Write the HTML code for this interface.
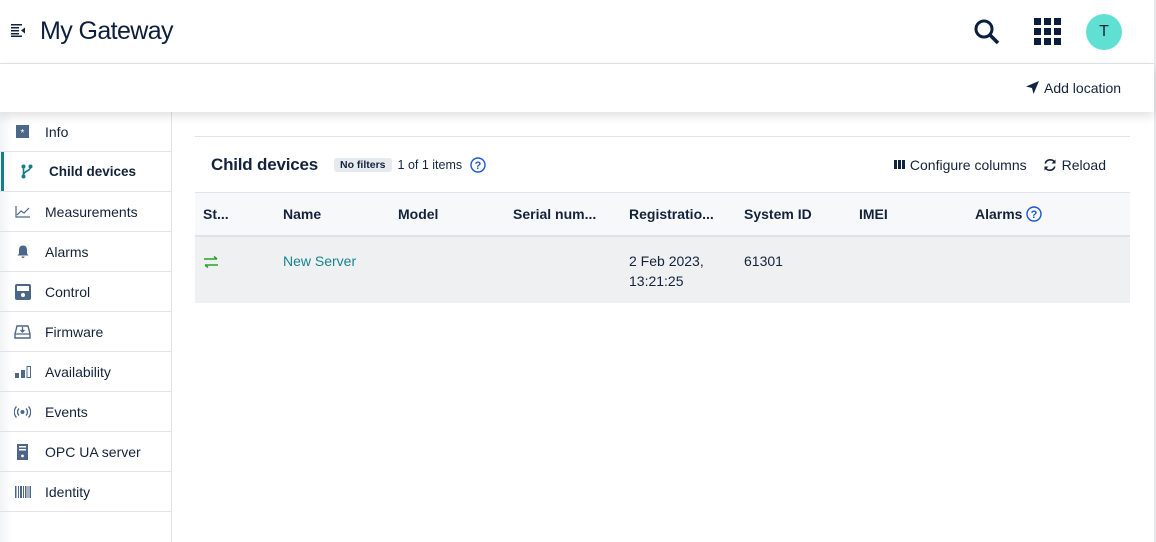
<!DOCTYPE html>
<html><head><style>
*{box-sizing:border-box;margin:0;padding:0}
body{width:1156px;height:542px;overflow:hidden;background:#fff;font-family:"Liberation Sans",sans-serif;color:#14233c;position:relative}
.hdr{position:absolute;left:0;top:0;width:1154px;height:64px;border-bottom:1px solid #e1e3e8;background:#fff}
.sub{position:absolute;left:0;top:64px;width:1154px;height:48px;background:#fff;box-shadow:0 4px 10px rgba(0,0,0,.12);z-index:2}
.rb{position:absolute;right:0;top:0;width:2px;height:542px;background:#e4e6ea}
.side{position:absolute;left:0;top:112px;width:172px;height:430px;border-right:1px solid #e1e3e8;background:linear-gradient(90deg,#f2f3f5 0,#fff 12px)}
.it{height:40px;border-bottom:1px solid #e1e3e8;display:flex;align-items:center;font-size:14px;position:relative}
.it .ic{width:45px;display:flex;justify-content:center;padding-left:6px;padding-right:6px}
.it.act{font-weight:bold;font-size:13.5px}
.it.act:before{content:"";position:absolute;left:1px;top:0;bottom:0;width:3px;background:#137d89}
.card{position:absolute;left:195px;top:136px;width:935px;border-top:1px solid #e1e3e8}
.th{height:56px;display:flex;align-items:center;padding-left:16px;border-bottom:1px solid #e1e3e8;font-size:13px}
.cols{height:44px;background:#f7f8fa;border-bottom:2px solid #dfe1e6;display:flex;align-items:center;font-weight:bold;font-size:14px}
.row{height:66px;background:#eff0f2;display:flex;font-size:14px;padding-top:16px;line-height:20px}
.c{position:absolute}
</style></head><body>
<div class="hdr">
 <svg style="position:absolute;left:11px;top:24px" width="15" height="13" viewBox="0 0 15 13"><g fill="#14233c"><rect x="0" y="0" width="11" height="1.5"/><rect x="0" y="3" width="8" height="1.5"/><rect x="0" y="6" width="8" height="1.5"/><rect x="0" y="9" width="8" height="1.5"/><rect x="0" y="11.5" width="11" height="1.5"/><path d="M14 3.5v6l-4-3z"/></g></svg>
 <div style="position:absolute;left:40px;top:17px;font-size:25px;letter-spacing:-0.6px;color:#0c1e3c">My Gateway</div>
 <svg style="position:absolute;left:973px;top:18px" width="28" height="28" viewBox="0 0 28 28"><circle cx="11" cy="11" r="8" fill="none" stroke="#0c1e3c" stroke-width="3"/><path d="M17 17l8 8" stroke="#0c1e3c" stroke-width="3.5"/></svg>
 <svg style="position:absolute;left:1034px;top:18px" width="27" height="27" viewBox="0 0 27 27" fill="#0c1e3c"><rect x="0" y="0" width="7" height="7"/><rect x="10" y="0" width="7" height="7"/><rect x="20" y="0" width="7" height="7"/><rect x="0" y="10" width="7" height="7"/><rect x="10" y="10" width="7" height="7"/><rect x="20" y="10" width="7" height="7"/><rect x="0" y="20" width="7" height="7"/><rect x="10" y="20" width="7" height="7"/><rect x="20" y="20" width="7" height="7"/></svg>
 <div style="position:absolute;left:1086px;top:14px;width:36px;height:36px;border-radius:50%;background:#5fe0d3;text-align:center;line-height:36px;font-size:16px;color:#14233c">T</div>
</div>
<div class="sub">
 <svg style="position:absolute;left:1026px;top:17px" width="13" height="13" viewBox="0 0 13 13"><path d="M13 0L0 5.5l6 1.5 1.5 6z" fill="#14233c"/></svg>
 <div style="position:absolute;left:1044px;top:16px;font-size:14px">Add location</div>
</div>
<div class="side">
 <div class="it"><span class="ic"><svg width="13" height="13"><rect width="13" height="13" fill="#4d6789"/><text x="6.5" y="11" font-size="10" fill="#fff" text-anchor="middle" font-family="Liberation Sans">*</text></svg></span>Info</div>
 <div class="it act"><span class="ic" style="padding-left:10px;width:49px"><svg width="12" height="15" viewBox="0 0 12 15"><g fill="#137d89"><circle cx="2.5" cy="2.5" r="2"/><circle cx="2.5" cy="12.5" r="2"/><circle cx="9.5" cy="2.5" r="2"/></g><path d="M2.5 3v10M9.5 3c0 4-7 4-7 8" stroke="#137d89" stroke-width="1.6" fill="none"/></svg></span>Child devices</div>
 <div class="it"><span class="ic"><svg width="15" height="12"><path d="M1 0v11h14" stroke="#4d6789" fill="none" stroke-width="1.2"/><path d="M2 9l4-4 3 2 5-5" stroke="#4d6789" fill="none" stroke-width="1.2"/></svg></span>Measurements</div>
 <div class="it"><span class="ic"><svg width="12" height="13"><path d="M6 0.5c3 0 4 2 4 5v3l1.5 2h-11L2 8.5v-3c0-3 1-5 4-5z M4.5 11.5h3a1.5 1.5 0 0 1-3 0z" fill="#4d6789"/></svg></span>Alarms</div>
 <div class="it"><span class="ic"><svg width="16" height="16"><rect width="16" height="16" rx="2" fill="#4d6789"/><rect x="2" y="2" width="12" height="5" fill="#fff"/><circle cx="8" cy="11" r="2" fill="#fff"/></svg></span>Control</div>
 <div class="it"><span class="ic"><svg width="17" height="14"><path d="M3 1h11l2 8v4H1V9z" fill="none" stroke="#4d6789" stroke-width="1.4"/><path d="M1 9h15M8.5 2v5M6.5 5l2 2 2-2" stroke="#4d6789" fill="none" stroke-width="1.3"/></svg></span>Firmware</div>
 <div class="it"><span class="ic"><svg width="16" height="12"><rect x="0" y="7" width="4" height="5" fill="#4d6789"/><rect x="6" y="4" width="4" height="8" fill="#4d6789"/><rect x="12" y="0.5" width="3.5" height="11" fill="none" stroke="#4d6789"/></svg></span>Availability</div>
 <div class="it"><span class="ic"><svg width="17" height="12"><circle cx="8.5" cy="6" r="2" fill="#4d6789"/><path d="M5 2.5a5 5 0 0 0 0 7M12 2.5a5 5 0 0 1 0 7M2.5 0.5a8 8 0 0 0 0 11M14.5 0.5a8 8 0 0 1 0 11" stroke="#4d6789" fill="none" stroke-width="1.3"/></svg></span>Events</div>
 <div class="it"><span class="ic"><svg width="11" height="16"><rect width="11" height="16" fill="#4d6789"/><rect x="2" y="2" width="7" height="1.5" fill="#fff"/><rect x="2" y="5" width="7" height="1.5" fill="#fff"/><circle cx="5.5" cy="12" r="1.4" fill="#fff"/></svg></span>OPC UA server</div>
 <div class="it"><span class="ic"><svg width="16" height="12" fill="#4d6789"><rect x="0" width="1.5" height="12"/><rect x="3" width="1" height="12"/><rect x="5" width="2" height="12"/><rect x="8" width="1" height="12"/><rect x="10" width="1.5" height="12"/><rect x="12.5" width="1" height="12"/><rect x="14.5" width="1.5" height="12"/></svg></span>Identity</div>
</div>
<div class="card">
 <div class="th"><span style="font-size:17px;font-weight:bold;margin-right:16px;letter-spacing:-0.2px">Child devices</span><span style="background:#e6e9ed;border-radius:3px;padding:1px 6px;font-size:10.5px;font-weight:bold;margin-right:6px">No filters</span><span style="font-size:12.5px">1 of 1 items</span>
  <svg style="margin-left:8px" width="16" height="16" viewBox="0 0 16 16"><circle cx="8" cy="8" r="7" fill="none" stroke="#1a57d8" stroke-width="1.4"/><text x="8" y="12" text-anchor="middle" font-size="11" font-weight="bold" fill="#1a57d8" font-family="Liberation Sans">?</text></svg>
  <span style="margin-left:auto;display:flex;align-items:center;font-size:14px"><svg width="11" height="9" style="margin-right:5px"><rect x="0" width="3" height="9" fill="#14233c"/><rect x="4" width="3" height="9" fill="#14233c"/><rect x="8" width="3" height="9" fill="#14233c"/></svg>Configure columns
  <svg width="14" height="14" viewBox="0 0 14 14" style="margin-left:16px;margin-right:5px"><path d="M12 5A5.2 5.2 0 0 0 2.2 5.5M2 9a5.2 5.2 0 0 0 9.8-.5" fill="none" stroke="#14233c" stroke-width="1.6"/><path d="M12.5 1.5v4h-4zM1.5 12.5v-4h4z" fill="#14233c"/></svg>Reload</span><span style="width:24px"></span></div>
 <div class="cols" style="position:relative">
  <span class="c" style="left:8px">St...</span><span class="c" style="left:88px">Name</span><span class="c" style="left:203px">Model</span><span class="c" style="left:318px">Serial num...</span><span class="c" style="left:434px">Registratio...</span><span class="c" style="left:549px">System ID</span><span class="c" style="left:664px">IMEI</span><span class="c" style="left:780px">Alarms <svg width="16" height="16" viewBox="0 0 16 16" style="vertical-align:-3px"><circle cx="8" cy="8" r="7" fill="none" stroke="#1a57d8" stroke-width="1.4"/><text x="8" y="12" text-anchor="middle" font-size="11" font-weight="bold" fill="#1a57d8" font-family="Liberation Sans">?</text></svg></span>
 </div>
 <div class="row" style="position:relative">
  <svg class="c" style="left:8px;top:18px" width="16" height="14"><path d="M1 4h13M11 1.5l3 2.5M15 10H2M5 12.5L2 10" stroke="#2aa12d" stroke-width="1.5" fill="none"/></svg>
  <span class="c" style="left:88px;top:14px;color:#15858f">New Server</span>
  <span class="c" style="left:434px;top:14px">2 Feb 2023,<br>13:21:25</span>
  <span class="c" style="left:549px;top:14px">61301</span>
 </div>
</div>
<div class="rb"></div>
</body></html>
